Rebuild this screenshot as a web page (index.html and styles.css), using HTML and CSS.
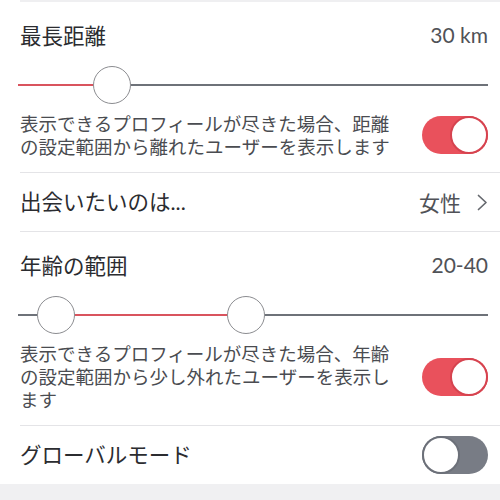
FILE: index.html
```html
<!DOCTYPE html>
<html lang="ja">
<head>
<meta charset="utf-8">
<link rel="stylesheet" href="styles.css">
</head>
<body>
<div class="page">
  <section class="section">
    <div class="head">
      <span class="title">最長距離</span>
      <span class="value">30 km</span>
    </div>
    <div class="slider">
      <div class="track red" style="width:75px"></div>
      <div class="thumb"></div>
      <div class="track gray grow"></div>
    </div>
    <div class="desc-row">
      <p class="desc">表示できるプロフィールが尽きた場合、距離の設定範囲から離れたユーザーを表示します</p>
      <div class="toggle on"><div class="knob"></div></div>
    </div>
  </section>
  <div class="row">
    <span class="title">出会いたいのは...</span>
    <span class="value link">女性
      <svg class="chev" width="11" height="17" viewBox="0 0 11 17"><polyline points="1.5,1.5 9,8.5 1.5,15.5" fill="none" stroke="#65686e" stroke-width="1.7" stroke-linecap="round" stroke-linejoin="round"/></svg>
    </span>
  </div>
  <section class="section">
    <div class="head">
      <span class="title">年齢の範囲</span>
      <span class="value">20-40</span>
    </div>
    <div class="slider">
      <div class="track gray" style="width:19px"></div>
      <div class="thumb"></div>
      <div class="track red" style="width:152px"></div>
      <div class="thumb"></div>
      <div class="track gray grow"></div>
    </div>
    <div class="desc-row">
      <p class="desc">表示できるプロフィールが尽きた場合、年齢の設定範囲から少し外れたユーザーを表示します</p>
      <div class="toggle on"><div class="knob"></div></div>
    </div>
  </section>
  <div class="row">
    <span class="title">グローバルモード</span>
    <div class="toggle off"><div class="knob"></div></div>
  </div>
  <div class="footer"></div>
</div>
</body>
</html>
```

FILE: styles.css
```css
html, body {
  margin: 0;
  padding: 0;
  background: #ffffff;
}
body {
  font-family: "Lato", "Noto Sans CJK JP", sans-serif;
  color: #2e2f33;
  width: 500px;
  height: 500px;
  overflow: hidden;
}
.page {
  display: flex;
  flex-direction: column;
}
.section, .row {
  margin-left: 20px;
  padding-right: 12px;
  border-top: 1px solid #e4e4e7;
}
.section:first-child {
  border-top: 2px solid #efeff1;
}
.section {
  padding-top: 19px;
  padding-bottom: 14px;
}
.head {
  display: flex;
  justify-content: space-between;
  align-items: center;
  height: 28px;
}
.title {
  font-size: 21.5px;
  line-height: 28px;
  color: #2b2c30;
  font-family: "Noto Sans CJK JP", sans-serif;
}
.row .title {
  font-family: "Lato", "Noto Sans CJK JP", sans-serif;
}
.value {
  font-size: 21px;
  line-height: 28px;
  color: #505257;
}
.link {
  display: flex;
  align-items: center;
  gap: 16px;
  font-family: "Noto Sans CJK JP", sans-serif;
}
.chev {
  display: block;
}
.slider {
  display: flex;
  align-items: center;
  height: 38px;
  margin-left: -2px;
  margin-top: 17px;
}
.track {
  height: 2.5px;
}
.track.red {
  background: #d9545e;
}
.track.gray {
  background: #6e7279;
}
.grow {
  flex: 1;
}
.thumb {
  width: 38px;
  height: 38px;
  box-sizing: border-box;
  border-radius: 50%;
  border: 1.5px solid #8b8c90;
  background: #ffffff;
  flex: none;
}
.desc-row {
  display: flex;
  justify-content: space-between;
  align-items: center;
  margin-top: 8px;
}
.desc {
  margin: 0;
  width: 380px;
  font-size: 18.5px;
  line-height: 23px;
  color: #4a4c51;
  font-family: "Noto Sans CJK JP", sans-serif;
}
.toggle {
  width: 66px;
  height: 38px;
  border-radius: 19px;
  box-sizing: border-box;
  display: flex;
  align-items: center;
  flex: none;
}
.toggle.on {
  background: #e9515c;
  justify-content: flex-end;
}
.toggle.off {
  background: #787c85;
  justify-content: flex-start;
}
.knob {
  width: 38px;
  height: 38px;
  box-sizing: border-box;
  border-radius: 50%;
  background: #ffffff;
}
.toggle.on .knob {
  border: 2px solid #d6434f;
}
.toggle.off .knob {
  border: 2px solid #6c7079;
}
.row {
  display: flex;
  justify-content: space-between;
  align-items: center;
  height: 58px;
}
.footer {
  height: 20px;
  background: #f0f0f2;
}
```
